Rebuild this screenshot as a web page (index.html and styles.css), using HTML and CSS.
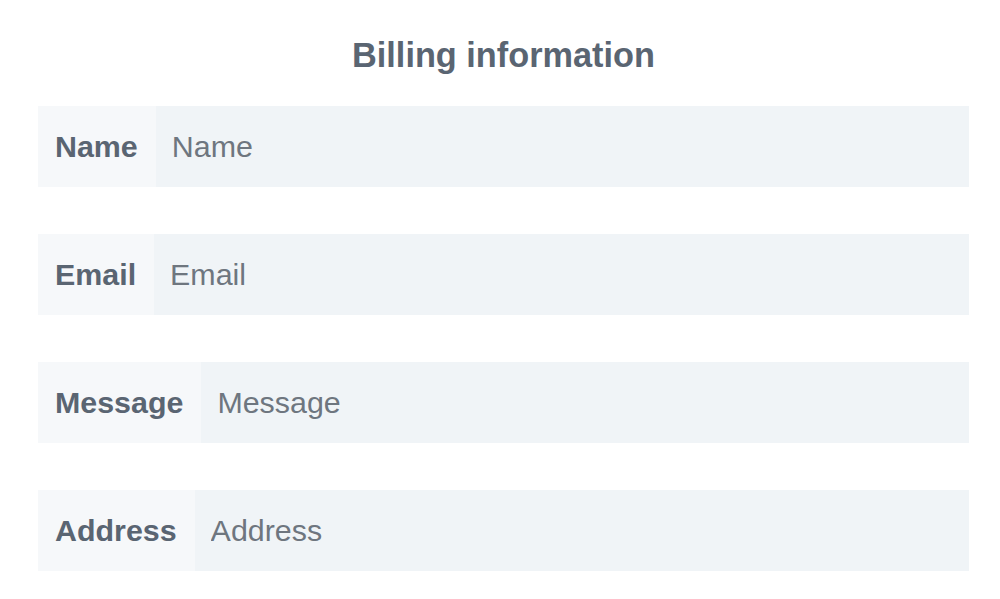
FILE: index.html
```html
<!DOCTYPE html>
<html lang="en">
<head>
<meta charset="utf-8">
<title>Billing information</title>
<link rel="stylesheet" href="styles.css">
</head>
<body>
<form class="billing">
  <h1 class="title">Billing information</h1>
  <div class="row">
    <label class="label" for="name">Name</label>
    <input class="field" id="name" type="text" placeholder="Name">
  </div>
  <div class="row">
    <label class="label" for="email">Email</label>
    <input class="field" id="email" type="text" placeholder="Email">
  </div>
  <div class="row">
    <label class="label" for="message">Message</label>
    <input class="field" id="message" type="text" placeholder="Message">
  </div>
  <div class="row">
    <label class="label" for="address">Address</label>
    <input class="field" id="address" type="text" placeholder="Address">
  </div>
</form>
</body>
</html>
```
FILE: styles.css
```css
html, body {
  margin: 0;
  padding: 0;
  background: #ffffff;
}

body {
  font-family: "Liberation Sans", Arial, Helvetica, sans-serif;
}

.billing {
  display: flex;
  flex-direction: column;
  gap: 47px;
  padding: 35px 31px 0 38px;
}

.title {
  margin: 0 0 -16px 0;
  font-size: 34.3px;
  line-height: 40px;
  font-weight: 700;
  color: #5a6572;
  text-align: center;
}

.row {
  display: flex;
  height: 81px;
}

.label {
  display: flex;
  align-items: center;
  padding: 0 18px 0 17px;
  background: #f6f8fa;
  color: #5a6572;
  font-size: 30.4px;
  font-weight: 700;
}

.field {
  flex: 1;
  min-width: 0;
  border: none;
  outline: none;
  margin: 0;
  padding: 0 16px;
  background: #f0f4f7;
  font-family: inherit;
  font-size: 30.4px;
  color: #5a6572;
}

.field::placeholder {
  color: #6e767f;
  opacity: 1;
}
```
